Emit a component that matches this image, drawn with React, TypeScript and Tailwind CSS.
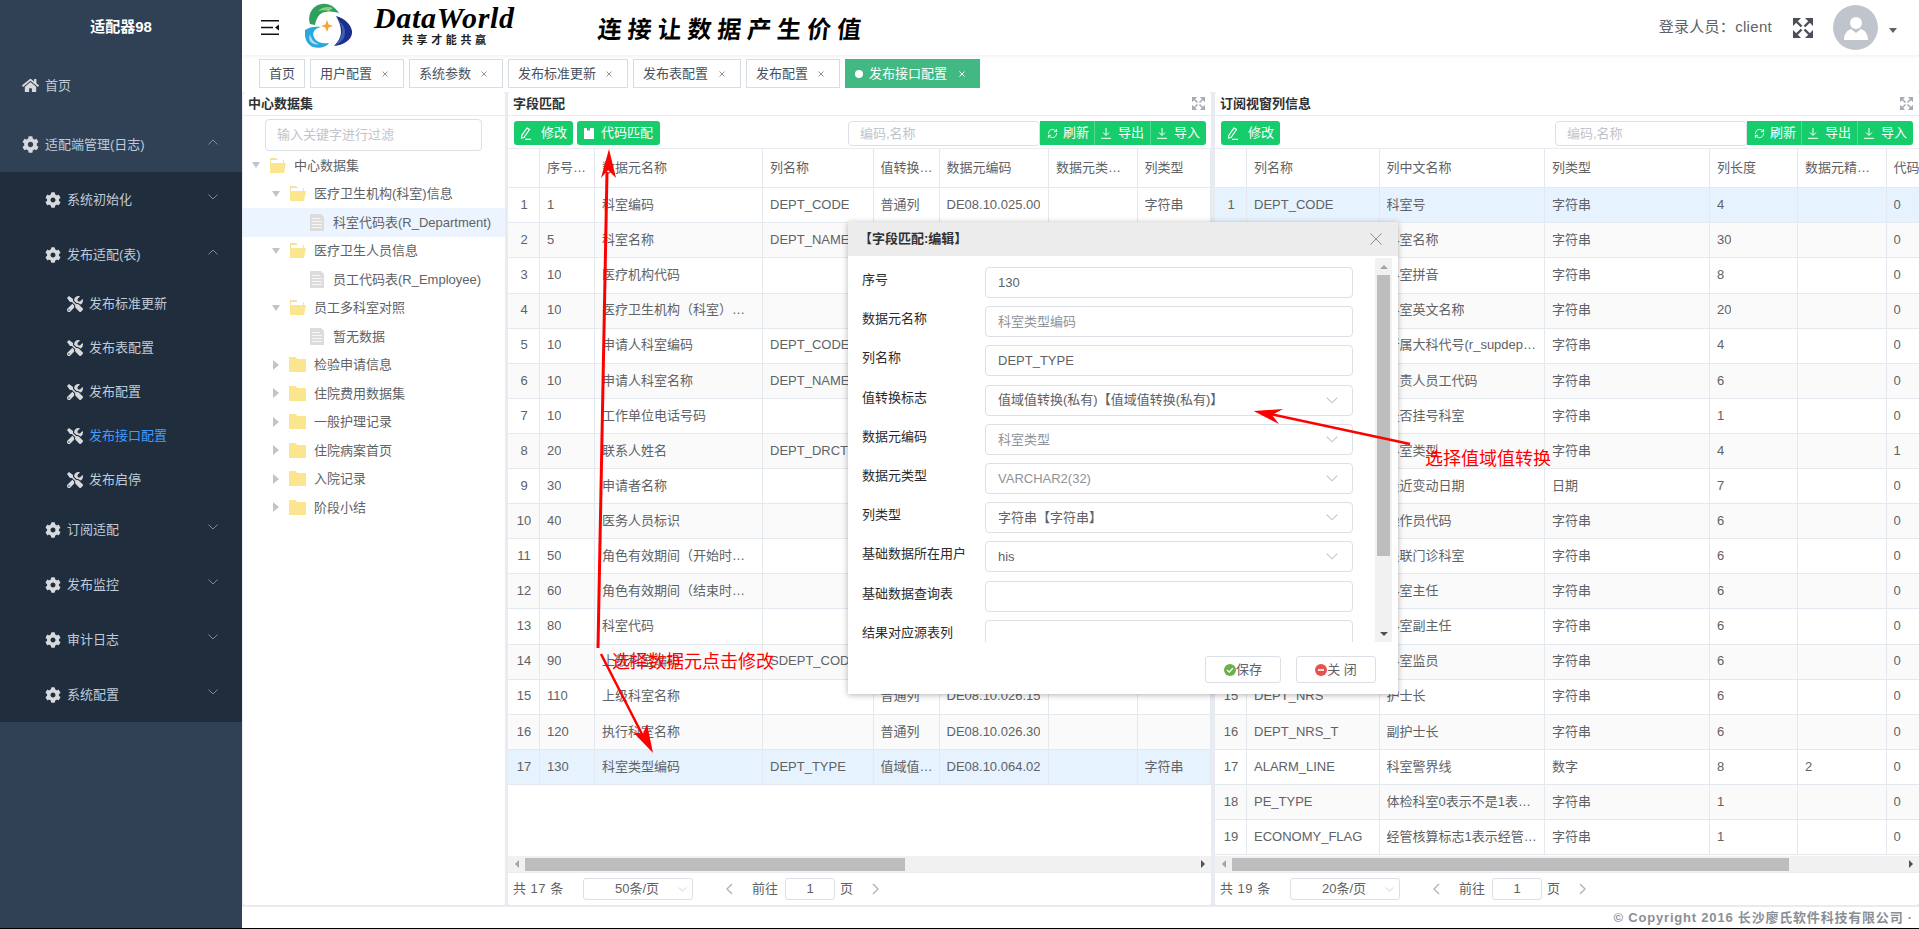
import React from "react";
import { FaCog, FaHome, FaTools } from "react-icons/fa";
import { RefreshCw } from "lucide-react";

const Chevron = ({ up = false, cls = "w-[10px] h-[6px] text-[#8b95a3]" }: { up?: boolean; cls?: string }) => (
  <svg viewBox="0 0 10 6" className={cls} fill="none" stroke="currentColor" strokeWidth="0.9">
    <polyline points={up ? "0.5,5.5 5,1 9.5,5.5" : "0.5,0.5 5,5 9.5,0.5"} />
  </svg>
);

const Expand = ({ cls }: { cls: string }) => (
  <svg viewBox="0 0 20 20" className={cls} fill="currentColor" stroke="currentColor">
    <path d="M0 0h8L0 8z M20 0h-8L20 8z M0 20h8L0 12z M20 20h-8L20 12z" strokeWidth="0" />
    <path d="M3 3l5.5 5.5M17 3l-5.5 5.5M3 17l5.5-5.5M17 17l-5.5-5.5" strokeWidth="2.4" fill="none" />
  </svg>
);

const Close = ({ tone = "text-[#909399]" }: { tone?: string }) => (
  <svg viewBox="0 0 6 6" className={`w-[6px] h-[6px] ${tone} shrink-0`} stroke="currentColor" strokeWidth="1">
    <path d="M0.5 0.5l5 5M5.5 0.5l-5 5" />
  </svg>
);

const Logo = () => (
  <svg viewBox="0 0 47 46" className="w-[47px] h-[46px] shrink-0">
    <path d="M5 21C2 11 8 2 17 1c7-1 13 3 17 9-6-2-12-2-17 0-4 2-6 7-7 12z" fill="#2f9f5e" />
    <path d="M13 8c4-4 10-5 15-3l-4 3c-4-1-8-1-11 0z" fill="#8ccf7c" />
    <path d="M31 13c8 2 15 8 16 15 1 8-8 14-18 15 4-4 7-9 7-14 0-6-2-11-5-16z" fill="#1c2f8c" />
    <path d="M33 17c3 4 5 8 4 13-1 4-4 9-7 12 6-2 10-6 10-13 0-5-3-9-7-12z" fill="#3a62b8" />
    <path d="M0 27c-1 8 2 15 8 17 6 2 14 0 16-4-6 1-11 0-14-4-2-3-3-7 1-10 2-1 4-2 5-2-6-1-12 0-16 3z" fill="#29a8e0" />
    <path d="M5 31c1 5 4 9 9 10-3 1-7 0-9-3-1-2-1-5 0-7z" fill="#a9def5" />
    <path d="M22 17l1.6 4.4L28 23l-4.4 1.6L22 29l-1.6-4.4L16 23l4.4-1.6z" fill="#f2a33a" />
  </svg>
);

const Item = ({ Icon, label, pl, h, open, active, chevron = true, iconSize }: any) => (
  <div className={`flex items-center ${h} ${pl}`}>
    <Icon className={`${iconSize} text-[#d7d9dc] shrink-0`} />
    <span className={`ml-[6px] text-[13px] ${active ? "text-[#409eff]" : "text-[#bfcbd9]"}`}>{label}</span>
    {chevron && (
      <span className="ml-auto mr-[24px] -mt-[6px]">
        <Chevron up={open} />
      </span>
    )}
  </div>
);

const Sidebar = () => (
  <aside className="w-[242px] shrink-0 bg-[#304156] flex flex-col">
    <div className="h-[58px] pb-[4px] flex items-center justify-center text-white font-bold text-[15px]">适配器98</div>
    <Item Icon={FaHome} label="首页" pl="pl-[22px]" h="h-[55px] mb-[4px]" chevron={false} iconSize="w-[17px] h-[17px]" />
    <Item Icon={FaCog} label="适配端管理(日志)" pl="pl-[22px]" h="h-[55px]" open iconSize="w-[17px] h-[17px]" />
    <div className="bg-[#1f2d3d]">
      <Item Icon={FaCog} label="系统初始化" pl="pl-[45px]" h="h-[55px]" iconSize="w-[16px] h-[16px]" />
      <Item Icon={FaCog} label="发布适配(表)" pl="pl-[45px]" h="h-[55px]" open iconSize="w-[16px] h-[16px]" />
      {["发布标准更新", "发布表配置", "发布配置", "发布接口配置", "发布启停"].map((t) => (
        <Item key={t} Icon={FaTools} label={t} pl="pl-[67px]" h="h-[44px]" chevron={false} active={t === "发布接口配置"} iconSize="w-[16px] h-[16px]" />
      ))}
      {["订阅适配", "发布监控", "审计日志", "系统配置"].map((t) => (
        <Item key={t} Icon={FaCog} label={t} pl="pl-[45px]" h="h-[55px]" iconSize="w-[16px] h-[16px]" />
      ))}
    </div>
  </aside>
);

const Header = () => (
  <header className="h-[55px] shrink-0 bg-white flex items-center pl-[19px] pr-[22px] shadow-[0_1px_4px_rgba(0,21,41,0.08)] z-10">
    <svg viewBox="0 0 18 15" className="w-[18px] h-[15px] shrink-0">
      <path d="M0 .8h18M0 7.5h12M0 14.2h18" stroke="#111" strokeWidth="1.6" />
      <path d="M18 4.5v6l-4-3z" fill="#111" />
    </svg>
    <div className="ml-[26px] -mt-[3px]"><Logo /></div>
    <div className="ml-[22px] flex flex-col items-start -mt-[6px]">
      <span className="font-['Liberation_Serif',serif] italic font-bold text-[30px] leading-[30px] text-black tracking-[0.7px]">DataWorld</span>
      <span className="ml-[28px] text-[11px] leading-[14px] font-bold text-[#222] tracking-[3.6px]">共享才能共赢</span>
    </div>
    <div className="ml-[83px] text-[24px] font-bold text-black tracking-[5.9px] font-['Noto_Sans_CJK_SC',sans-serif] -skew-x-6">连接让数据产生价值</div>
    <div className="ml-auto text-[15px] text-[#606266] whitespace-pre tracking-[0.3px]">登录人员：client</div>
    <Expand cls="ml-[21px] w-[20px] h-[20px] text-[#4a4f57] shrink-0" />
    <div className="ml-[20px] w-[45px] h-[45px] rounded-full bg-[#c0c4cc] flex items-center justify-center shrink-0">
      <svg viewBox="0 0 26 26" className="w-[26px] h-[26px]" fill="#fff">
        <circle cx="13" cy="8" r="6" />
        <path d="M1 25c0-7 4-10 7-11l5 4 5-4c3 1 7 4 7 11z" />
      </svg>
    </div>
    <div className="ml-[11px] w-0 h-0 border-x-[4px] border-x-transparent border-t-[5px] border-t-[#606266] mt-[5px]" />
  </header>
);

const tabs = [
  { t: "首页", w: "w-[46px]", x: false },
  { t: "用户配置", w: "w-[94px]", x: true },
  { t: "系统参数", w: "w-[94px]", x: true },
  { t: "发布标准更新", w: "w-[120px]", x: true },
  { t: "发布表配置", w: "w-[108px]", x: true },
  { t: "发布配置", w: "w-[94px]", x: true },
];

const Tabs = () => (
  <div className="h-[37px] shrink-0 bg-white flex gap-[5px] pl-[17px] pt-[4px] pb-[4px] text-[13px] text-[#495060]">
    {tabs.map((tab) => (
      <div key={tab.t} className={`${tab.w} h-[29px] shrink-0 whitespace-nowrap border border-[#d8dce5] flex items-center ${tab.x ? "pl-[9px] pr-[15px] justify-between" : "justify-center"}`}>
        <span>{tab.t}</span>
        {tab.x && <Close />}
      </div>
    ))}
    <div className="w-[135px] h-[29px] shrink-0 bg-[#42b983] text-white flex items-center pl-[10px] pr-[15px]">
      <span className="w-[8px] h-[8px] rounded-full bg-white shrink-0" />
      <span className="ml-[6px]">发布接口配置</span>
      <span className="ml-auto"><Close tone="text-white" /></span>
    </div>
  </div>
);

const Folder = ({ open }: { open: boolean }) =>
  open ? (
    <svg viewBox="0 0 17 17" className="w-[17px] h-[17px] shrink-0">
      <path d="M1 1h6l2 2h6v3H1z" fill="#f2e2a0" />
      <path d="M2 3h12v3H2z" fill="#fff" />
      <path d="M1 6h16l-2 10H1z" fill="#fbe68f" />
    </svg>
  ) : (
    <svg viewBox="0 0 17 17" className="w-[17px] h-[17px] shrink-0">
      <path d="M0 1h7l1 2h9v13H0z" fill="#fbe68f" />
    </svg>
  );

const Doc = () => (
  <svg viewBox="0 0 14 17" className="w-[14px] h-[17px] shrink-0">
    <path d="M0 0h11l3 3v14H0z" fill="#dcdcdc" />
    <path d="M2 4h8v1H2zM2 7h10v1H2zM2 10h10v1H2zM2 13h10v1H2z" fill="#f6f6f6" />
  </svg>
);

const Arrow = ({ open }: { open: boolean }) => (
  <span className="w-[12px] flex justify-center shrink-0">
    {open ? (
      <span className="w-0 h-0 border-x-[4px] border-x-transparent border-t-[6px] border-t-[#c0c4cc]" />
    ) : (
      <span className="w-0 h-0 border-y-[5px] border-y-transparent border-l-[6px] border-l-[#c0c4cc]" />
    )}
  </span>
);

const treeData = [
  { t: "中心数据集", pl: "pl-[7px]", open: true },
  { t: "医疗卫生机构(科室)信息", pl: "pl-[27px]", open: true },
  { t: "科室代码表(R_Department)", leaf: true, sel: true },
  { t: "医疗卫生人员信息", pl: "pl-[27px]", open: true },
  { t: "员工代码表(R_Employee)", leaf: true },
  { t: "员工多科室对照", pl: "pl-[27px]", open: true },
  { t: "暂无数据", leaf: true },
  { t: "检验申请信息", pl: "pl-[27px]", open: false },
  { t: "住院费用数据集", pl: "pl-[27px]", open: false },
  { t: "一般护理记录", pl: "pl-[27px]", open: false },
  { t: "住院病案首页", pl: "pl-[27px]", open: false },
  { t: "入院记录", pl: "pl-[27px]", open: false },
  { t: "阶段小结", pl: "pl-[27px]", open: false },
];

const TitleBar = ({ title, expand }: { title: string; expand?: boolean }) => (
  <div className="h-[24px] shrink-0 border-b border-[#e9ecf1] flex items-center pl-[5px] pr-[6px] text-[13px] font-bold text-[#303133]">
    <span>{title}</span>
    {expand && <Expand cls="ml-auto w-[13px] h-[13px] text-[#a5abb3]" />}
  </div>
);

const TreePanel = () => (
  <section className="w-[262px] shrink-0 ml-[1px] bg-white rounded-[3px] flex flex-col">
    <TitleBar title="中心数据集" />
    <div className="pl-[22px] pr-[23px] pt-[3px]">
      <div className="h-[32px] border border-[#dcdfe6] rounded-[4px] flex items-center pl-[11px] text-[13px] text-[#c0c4cc]">输入关键字进行过滤</div>
    </div>
    {treeData.map((n) => (
      <div key={n.t} className={`h-[28.5px] flex items-center text-[13px] text-[#606266] ${n.sel ? "bg-[#ecf5ff]" : ""} ${n.leaf ? "pl-[67px]" : n.pl}`}>
        {n.leaf ? (
          <Doc />
        ) : (
          <>
            <Arrow open={!!n.open} />
            <span className="ml-[7px]"><Folder open={!!n.open} /></span>
          </>
        )}
        <span className={n.leaf ? "ml-[9px]" : "ml-[8px]"}>{n.t}</span>
      </div>
    ))}
  </section>
);

const Pencil = () => (
  <svg viewBox="0 0 11 13" className="w-[11px] h-[13px] shrink-0" fill="none" stroke="#fff" strokeWidth="1.2">
    <path d="M7 1l2.5 1.5L4 10.5 1.5 11l.3-2.6z" />
    <path d="M5 12.3h6" />
  </svg>
);

const Note = () => (
  <svg viewBox="0 0 10 11" className="w-[10px] h-[11px] shrink-0" fill="#fff">
    <path d="M0 0h3v3l1.5-1L6 3V0h4v11H0z" />
  </svg>
);

const Down = () => (
  <svg viewBox="0 0 10 11" className="w-[10px] h-[11px] shrink-0" fill="none" stroke="#fff" strokeWidth="1">
    <path d="M5 0v7M2 4.5L5 7.5 8 4.5M0 10.3h10" />
  </svg>
);

const Toolbar = ({ code, spacer }: { code?: boolean; spacer: string }) => (
  <div className="h-[33px] shrink-0 border-b border-[#e9ecf1] flex items-start pt-[5px] pl-[6px] text-[13px] text-white">
    <div className="w-[59px] h-[24px] bg-[#17cc6b] rounded-[3px] flex items-center pl-[6px]">
      <Pencil />
      <span className="ml-[10px]">修改</span>
    </div>
    {code && (
      <div className="ml-[4px] w-[83px] h-[24px] bg-[#17cc6b] rounded-[3px] flex items-center pl-[7px]">
        <Note />
        <span className="ml-[7px]">代码匹配</span>
      </div>
    )}
    <div className={`${spacer} w-[192px] h-[25px] border border-[#dcdfe6] rounded-[4px] flex items-center pl-[11px] text-[#c0c4cc] bg-white`}>编码,名称</div>
    <div className="h-[24px] w-[166px] bg-[#17cc6b] rounded-r-[3px] flex">
      <div className="w-[55px] flex items-center pl-[7px] border-r border-[#4fdc90]">
        <RefreshCw size={11} strokeWidth={2} className="shrink-0" />
        <span className="ml-[5px]">刷新</span>
      </div>
      <div className="w-[56px] flex items-center pl-[6px] border-r border-[#4fdc90]">
        <Down />
        <span className="ml-[7px]">导出</span>
      </div>
      <div className="w-[55px] flex items-center pl-[6px]">
        <Down />
        <span className="ml-[7px]">导入</span>
      </div>
    </div>
  </div>
);

const Row = ({ cells, cols, cls }: { cells: string[]; cols: string[]; cls: string }) => (
  <div className={`flex w-max border-b border-[#e4e8ef] text-[13px] text-[#606266] ${cls}`}>
    {cols.map((c, i) => (
      <div key={i} className={`${c} shrink-0 border-r border-[#e4e8ef] pl-[7px] pb-[1px] flex items-center overflow-hidden ${i === 0 ? "justify-center" : ""}`}>
        <span className="truncate">{cells[i]}</span>
      </div>
    ))}
  </div>
);

const HScroll = ({ thumb }: { thumb: string }) => (
  <div className="h-[17px] shrink-0 bg-[#f1f1f1] flex items-center border-b border-[#e9ecf1]">
    <span className="w-[17px] flex justify-center">
      <span className="w-0 h-0 border-y-[4px] border-y-transparent border-r-[4px] border-r-[#a3a3a3]" />
    </span>
    <div className={`${thumb} h-[13px] bg-[#bdbdbd]`} />
    <span className="flex-1" />
    <span className="w-[17px] flex justify-center">
      <span className="w-0 h-0 border-y-[4px] border-y-transparent border-l-[4px] border-l-[#505050]" />
    </span>
  </div>
);

const Pager = ({ total, size }: { total: string; size: string }) => (
  <div className="h-[32px] shrink-0 flex items-center pl-[5px] text-[13px] text-[#606266]">
    <span className="w-[70px] tracking-[0.5px]">{total}</span>
    <div className="w-[110px] h-[22px] border border-[#dcdfe6] rounded-[3px] flex items-center pl-[31px]">
      <span>{size}</span>
      <span className="ml-[19px]"><Chevron cls="w-[9px] h-[5px] text-[#c0c4cc]" /></span>
    </div>
    <svg viewBox="0 0 7 12" className="ml-[33px] w-[7px] h-[12px]" fill="none" stroke="#b4b7bd" strokeWidth="1.5"><path d="M6 1L1 6l5 5" /></svg>
    <span className="ml-[19px] w-[29px]">前往</span>
    <div className="ml-[4px] w-[50px] h-[22px] border border-[#dcdfe6] rounded-[3px] flex items-center justify-center">1</div>
    <span className="ml-[5px]">页</span>
    <svg viewBox="0 0 7 12" className="ml-[19px] w-[7px] h-[12px]" fill="none" stroke="#b4b7bd" strokeWidth="1.5"><path d="M1 1l5 5-5 5" /></svg>
  </div>
);

const leftCols = ["w-[32px] pr-[6px]", "w-[55px] pr-[6px]", "w-[168px] pr-[6px]", "w-[110.5px] pr-[6px]", "w-[66px] pr-[2px]", "w-[109.5px] pr-[6px]", "w-[88.5px] pr-[6px]", "w-[73.5px] pr-[6px]"];
const leftHead = ["", "序号顺序", "数据元名称", "列名称", "值转换标志", "数据元编码", "数据元类型名称", "列类型"];
const leftRows: string[][] = [
  ["1", "1", "科室编码", "DEPT_CODE", "普通列", "DE08.10.025.00", "", "字符串"],
  ["2", "5", "科室名称", "DEPT_NAME", "普通列", "DE08.10.026.00", "", "字符串"],
  ["3", "10", "医疗机构代码", "", "普通列", "", "", ""],
  ["4", "10", "医疗卫生机构（科室）名称", "", "普通列", "", "", ""],
  ["5", "10", "申请人科室编码", "DEPT_CODE", "普通列", "", "", ""],
  ["6", "10", "申请人科室名称", "DEPT_NAME", "普通列", "", "", ""],
  ["7", "10", "工作单位电话号码", "", "普通列", "", "", ""],
  ["8", "20", "联系人姓名", "DEPT_DRCTOR", "普通列", "", "", ""],
  ["9", "30", "申请者名称", "", "普通列", "", "", ""],
  ["10", "40", "医务人员标识", "", "普通列", "", "", ""],
  ["11", "50", "角色有效期间（开始时间）", "", "普通列", "", "", ""],
  ["12", "60", "角色有效期间（结束时间）", "", "普通列", "", "", ""],
  ["13", "80", "科室代码", "", "普通列", "", "", ""],
  ["14", "90", "上级科室编码", "SDEPT_CODE", "普通列", "", "", ""],
  ["15", "110", "上级科室名称", "", "普通列", "DE08.10.026.15", "", ""],
  ["16", "120", "执行科室名称", "", "普通列", "DE08.10.026.30", "", ""],
  ["17", "130", "科室类型编码", "DEPT_TYPE", "值域值转换(私有)", "DE08.10.064.02", "", "字符串"],
];

const rightCols = ["w-[32px] pr-[6px]", "w-[132.5px] pr-[6px]", "w-[165.5px] pr-[6px]", "w-[165px] pr-[6px]", "w-[88px] pr-[6px]", "w-[88.5px] pr-[6px]", "w-[60px] pr-[6px]"];
const rightHead = ["", "列名称", "列中文名称", "列类型", "列长度", "数据元精度值", "代码"];
const s = "字符串";
const rightRows: string[][] = [
  ["1", "DEPT_CODE", "科室号", s, "4", "", "0"],
  ["2", "DEPT_NAME", "科室名称", s, "30", "", "0"],
  ["3", "DEPT_PY", "科室拼音", s, "8", "", "0"],
  ["4", "DEPT_EN", "科室英文名称", s, "20", "", "0"],
  ["5", "SUP_DEPT", "所属大科代号(r_supdepartment)", s, "4", "", "0"],
  ["6", "RESP_CODE", "负责人员工代码", s, "6", "", "0"],
  ["7", "REG_FLAG", "是否挂号科室", s, "1", "", "0"],
  ["8", "DEPT_TYPE", "科室类型", s, "4", "", "1"],
  ["9", "LAST_DATE", "最近变动日期", "日期", "7", "", "0"],
  ["10", "OPER_CODE", "操作员代码", s, "6", "", "0"],
  ["11", "OUT_DEPT", "关联门诊科室", s, "6", "", "0"],
  ["12", "DEPT_DIR", "科室主任", s, "6", "", "0"],
  ["13", "DEPT_DIR_V", "科室副主任", s, "6", "", "0"],
  ["14", "DEPT_SUP", "科室监员", s, "6", "", "0"],
  ["15", "DEPT_NRS", "护士长", s, "6", "", "0"],
  ["16", "DEPT_NRS_T", "副护士长", s, "6", "", "0"],
  ["17", "ALARM_LINE", "科室警界线", "数字", "8", "2", "0"],
  ["18", "PE_TYPE", "体检科室0表示不是1表示是", s, "1", "", "0"],
  ["19", "ECONOMY_FLAG", "经管核算标志1表示经管科室", s, "1", "", "0"],
];

const rowBg = (i: number, sel: number) => (i === sel ? "bg-[#e6f3ff]" : i % 2 === 1 ? "bg-[#fafafa]" : "bg-white");

const TablePanel = ({ title, width, code, spacer, cols, head, rows, sel, thumb, total, size }: any) => (
  <section className={`${width} shrink-0 bg-white rounded-[3px] flex flex-col overflow-hidden`}>
    <TitleBar title={title} expand />
    <Toolbar code={code} spacer={spacer} />
    <div className="flex-1 min-h-0 overflow-hidden">
      <Row cells={head} cols={cols} cls="h-[39.3px] bg-white" />
      {rows.map((r: string[], i: number) => (
        <Row key={i} cells={r} cols={cols} cls={`h-[35.1px] ${rowBg(i, sel)}`} />
      ))}
    </div>
    <HScroll thumb={thumb} />
    <Pager total={total} size={size} />
  </section>
);

const Field = ({ label, value, tone = "text-[#606266]", select }: { label: string; value?: string; tone?: string; select?: boolean }) => (
  <div className="h-[39.2px] shrink-0 flex items-start">
    <span className="w-[123px] pt-[3px] leading-[20px] text-[13px] text-[#2b2b2b]">{label}</span>
    <div className={`w-[368px] h-[31px] shrink-0 border border-[#dcdfe6] rounded-[4px] flex items-center pl-[12px] pr-[14px] text-[13px] ${tone}`}>
      <span>{value}</span>
      {select && <span className="ml-auto"><Chevron cls="w-[12px] h-[7px] text-[#c0c4cc]" /></span>}
    </div>
  </div>
);

const Dialog = () => (
  <div className="absolute left-[848px] top-[222px] w-[550px] h-[472px] bg-white shadow-[0_1px_6px_rgba(0,0,0,0.3)] flex flex-col z-20">
    <div className="h-[34px] shrink-0 bg-[#ececec] flex items-center pl-[11px] pr-[16px] text-[13px] font-bold text-[#303133]">
      <span>【字段匹配:编辑】</span>
      <svg viewBox="0 0 12 12" className="ml-auto w-[12px] h-[12px] text-[#8f8f8f]" stroke="currentColor" strokeWidth="1"><path d="M.5.5l11 11M11.5.5l-11 11" /></svg>
    </div>
    <div className="h-[384px] mt-[2px] shrink-0 flex">
      <div className="w-[527px] shrink-0 overflow-hidden pl-[14px] pt-[9px]">
        <Field label="序号" value="130" />
        <Field label="数据元名称" value="科室类型编码" tone="text-[#909399]" />
        <Field label="列名称" value="DEPT_TYPE" />
        <Field label="值转换标志" value="值域值转换(私有)【值域值转换(私有)】" select />
        <Field label="数据元编码" value="科室类型" tone="text-[#909399]" select />
        <Field label="数据元类型" value="VARCHAR2(32)" tone="text-[#909399]" select />
        <Field label="列类型" value="字符串【字符串】" select />
        <Field label="基础数据所在用户" value="his" select />
        <Field label="基础数据查询表" />
        <Field label="结果对应源表列" />
      </div>
      <div className="w-[17px] shrink-0 bg-[#f1f1f1] flex flex-col items-center">
        <span className="h-[17px] flex items-center justify-center shrink-0">
          <span className="w-0 h-0 border-x-[4px] border-x-transparent border-b-[4px] border-b-[#a3a3a3]" />
        </span>
        <div className="w-[13px] h-[281px] bg-[#bdbdbd] shrink-0" />
        <span className="flex-1" />
        <span className="h-[17px] flex items-center justify-center shrink-0">
          <span className="w-0 h-0 border-x-[4px] border-x-transparent border-t-[4px] border-t-[#505050]" />
        </span>
      </div>
    </div>
    <div className="flex justify-end gap-[15px] pr-[22px] pt-[14px] text-[13px] text-[#606266]">
      <div className="w-[76px] h-[27px] border border-[#dcdfe6] rounded-[3px] flex items-center justify-center">
        <svg viewBox="0 0 12 12" className="w-[12px] h-[12px] shrink-0"><circle cx="6" cy="6" r="6" fill="#6ab04c" /><path d="M3 6l2.2 2.2L9 4" stroke="#fff" strokeWidth="1.2" fill="none" /></svg>
        <span>保存</span>
      </div>
      <div className="w-[80px] h-[27px] border border-[#dcdfe6] rounded-[3px] flex items-center justify-center">
        <svg viewBox="0 0 12 12" className="w-[12px] h-[12px] shrink-0"><circle cx="6" cy="6" r="6" fill="#e8534f" /><path d="M3 6h6" stroke="#fff" strokeWidth="1.6" /></svg>
        <span className="whitespace-pre">关 闭</span>
      </div>
    </div>
  </div>
);

const Annotations = () => (
  <>
    <svg viewBox="0 0 1919 929" className="absolute left-0 top-0 w-[1919px] h-[929px] pointer-events-none z-30">
      <path d="M598 648L607 172" stroke="#f00" strokeWidth="3" fill="none" />
      <polygon points="609,149 616,178 608,170 601,178" fill="#f00" />
      <path d="M601 654L645 740" stroke="#f00" strokeWidth="2.5" fill="none" />
      <polygon points="653,753 633,732 643,734 647,724" fill="#f00" />
      <path d="M1410 444L1270 414" stroke="#f00" strokeWidth="2.5" fill="none" />
      <polygon points="1253.6,411 1283,409 1272,415 1279,424" fill="#f00" />
    </svg>
    <div className="absolute left-[612px] top-[649px] text-[18px] leading-[26px] text-[#ff0000] z-30 whitespace-nowrap">选择数据元点击修改</div>
    <div className="absolute left-[1425px] top-[446px] text-[18px] leading-[26px] text-[#ff0000] z-30 whitespace-nowrap">选择值域值转换</div>
  </>
);

export default function App() {
  return (
    <div className="relative w-[1919px] h-[929px] overflow-hidden flex flex-col bg-white font-['Liberation_Sans','Noto_Sans_CJK_SC',sans-serif]">
      <div className="flex h-[928px] shrink-0">
        <Sidebar />
        <main className="flex-1 min-w-0 flex flex-col">
          <Header />
          <Tabs />
          <div className="h-[815px] shrink-0 bg-[#e8ebf2] pb-[2px] flex">
            <TreePanel />
            <div className="w-[3px] shrink-0" />
            <TablePanel
              title="字段匹配"
              width="w-[703px]"
              code
              spacer="ml-[188px]"
              cols={leftCols}
              head={leftHead}
              rows={leftRows}
              sel={16}
              thumb="w-[380px]"
              total="共 17 条"
              size="50条/页"
            />
            <div className="w-[4px] shrink-0" />
            <TablePanel
              title="订阅视窗列信息"
              width="w-[704px]"
              spacer="ml-[275px]"
              cols={rightCols}
              head={rightHead}
              rows={rightRows}
              sel={0}
              thumb="w-[557px]"
              total="共 19 条"
              size="20条/页"
            />
          </div>
          <div className="h-[21px] shrink-0 bg-white flex items-center justify-end pr-[6px] text-[13px] font-bold text-[#8a8f96] tracking-[0.8px]">
            © Copyright 2016 长沙廖氏软件科技有限公司 ·
          </div>
        </main>
      </div>
      <div className="h-px bg-black shrink-0" />
      <Dialog />
      <Annotations />
    </div>
  );
}
